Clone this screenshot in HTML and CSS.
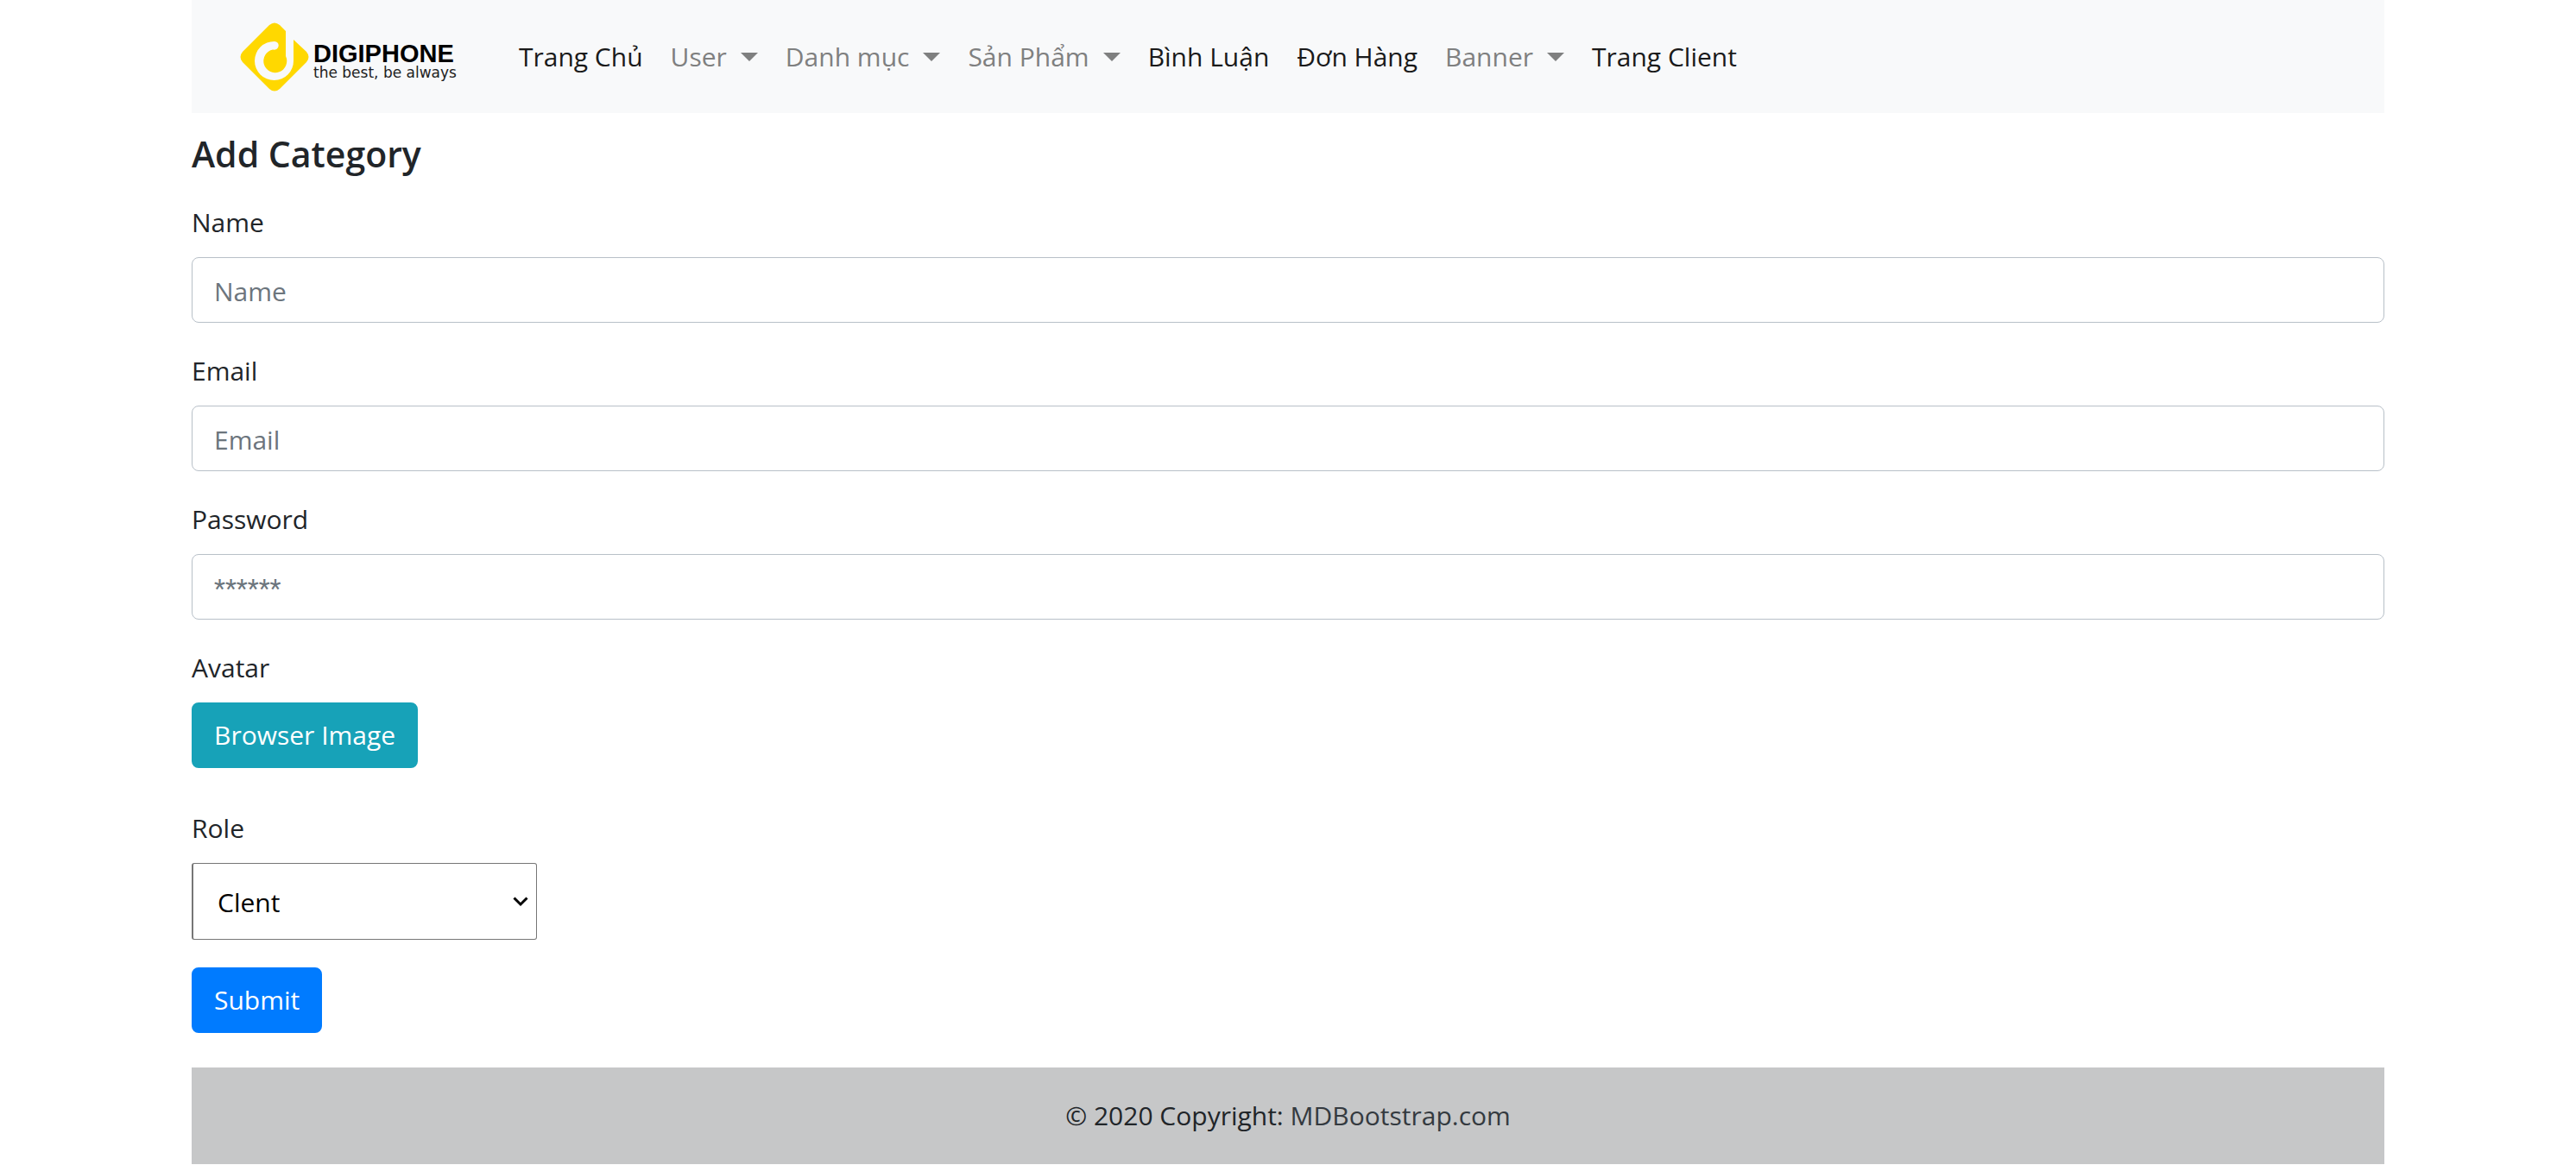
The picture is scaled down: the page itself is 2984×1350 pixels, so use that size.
FILE: index.html
```html
<!DOCTYPE html>
<html lang="vi">
<head>
<meta charset="utf-8">
<meta name="viewport" content="width=device-width, initial-scale=1">
<title>Add Category</title>
<link rel="stylesheet" href="styles.css">
</head>
<body>
<div class="container">
  <header class="navbar">
    <a class="brand" href="#">
      <svg class="brand-mark" viewBox="0 0 80 80" aria-hidden="true">
        <path fill="#ffd800" d="M34 3Q40-2 46 3L53 10V39A13.500 13.500 0 1 1 38 31.500C46 33 47 22 40 22A22.500 22.500 0 1 0 62 44V20L77 34Q82 40 77 46L46 77Q40 82 34 77L3 46Q-2 40 3 34Z"/>
      </svg>
      <span class="brand-text">
        <span class="brand-name">DIGIPHONE</span>
        <span class="brand-tagline">the best, be always</span>
      </span>
    </a>
    <nav class="nav">
      <a class="nav-link" href="#">Trang Chủ</a>
      <a class="nav-link nav-dropdown" href="#">User</a>
      <a class="nav-link nav-dropdown" href="#">Danh mục</a>
      <a class="nav-link nav-dropdown" href="#">Sản Phẩm</a>
      <a class="nav-link" href="#">Bình Luận</a>
      <a class="nav-link" href="#">Đơn Hàng</a>
      <a class="nav-link nav-dropdown" href="#">Banner</a>
      <a class="nav-link" href="#">Trang Client</a>
    </nav>
  </header>
  <main>
    <h1 class="title">Add Category</h1>
    <form class="form">
      <div class="form-group">
        <label for="name">Name</label>
        <input class="form-control" id="name" type="text" placeholder="Name">
      </div>
      <div class="form-group">
        <label for="email">Email</label>
        <input class="form-control" id="email" type="email" placeholder="Email">
      </div>
      <div class="form-group">
        <label for="password">Password</label>
        <input class="form-control form-control-password" id="password" type="password" placeholder="******">
      </div>
      <div class="form-group form-group-avatar">
        <label for="avatar">Avatar</label>
        <button class="btn btn-info" id="avatar" type="button">Browser Image</button>
      </div>
      <div class="form-group">
        <label for="role">Role</label>
        <div class="select">
          <select id="role"><option>Clent</option><option>Admin</option></select>
          <svg class="select-arrow" viewBox="0 0 18 12" aria-hidden="true"><path d="M1.500 1.500L9 9L16.500 1.500" fill="none" stroke="#000" stroke-width="3"/></svg>
        </div>
      </div>
      <button class="btn btn-primary" type="submit">Submit</button>
    </form>
  </main>
  <footer class="footer">© 2020 Copyright: <a href="#">MDBootstrap.com</a></footer>
</div>
</body>
</html>
```
FILE: styles.css
```css
* { box-sizing: border-box; }

body {
  margin: 0;
  background: #fff;
  color: #212529;
  font-family: "Open Sans", "Noto Sans", sans-serif;
  font-size: 30px;
  line-height: 48px;
}

.container {
  max-width: 2540px;
  margin: 0 auto;
}

.navbar {
  display: flex;
  flex-wrap: wrap;
  align-items: center;
  gap: 56px;
  min-height: 131px;
  padding: 16px 56px;
  background: #f8f9fa;
}

.brand {
  display: flex;
  align-items: center;
  gap: 5px;
  color: #000;
  text-decoration: none;
}

.brand-mark { width: 80px; height: 80px; }

.brand-text {
  display: flex;
  flex-direction: column;
  padding-top: 12px;
}

.brand-name {
  font: bold 29px/24px "Liberation Sans", Arial, sans-serif;
}

.brand-tagline {
  color: #222;
  font: 17px/20px "DejaVu Sans", sans-serif;
}

.nav {
  display: flex;
  flex-wrap: wrap;
}

.nav-link {
  padding: 0 16px;
  color: #1a1a1a;
  text-decoration: none;
}

.nav-dropdown {
  display: flex;
  align-items: center;
  gap: 16px;
  color: #7f8080;
}

.nav-dropdown::after {
  content: "";
  border: 10px solid transparent;
  border-top-color: currentColor;
  border-bottom: 0;
}

.title {
  margin: 20px 0 28px;
  font-size: 41px;
  font-weight: 600;
  line-height: 55px;
}

.form {
  display: flex;
  flex-direction: column;
  align-items: flex-start;
  gap: 32px;
}

.form-group {
  display: flex;
  flex-direction: column;
  align-items: flex-start;
  gap: 16px;
  width: 100%;
}

.form-group-avatar { margin-bottom: 14px; }

.form-control {
  width: 100%;
  height: 76px;
  padding: 2px 25px 0;
  border: 1px solid #b8c0c8;
  border-radius: 8px;
  background: #fff;
  color: #495057;
  font: inherit;
}

.form-control::placeholder { color: #6c757d; opacity: 1; }

.form-control-password { font-family: Roboto, sans-serif; }

.btn {
  height: 76px;
  padding: 0 24px;
  border: 2px solid transparent;
  border-radius: 8px;
  color: #fff;
  font: inherit;
}

.btn-info { border-color: #17a2b8; background: #17a2b8; }
.btn-primary { border-color: #007bff; background: #007bff; }

.select {
  display: grid;
  align-items: center;
  width: 400px;
}

.select select {
  grid-area: 1 / 1;
  width: 100%;
  height: 89px;
  padding: 2px 28px 0;
  border: 1px solid #767676;
  border-left-width: 2px;
  border-radius: 3px;
  background: #fff;
  color: #000;
  font: inherit;
  appearance: none;
}

.select-arrow {
  grid-area: 1 / 1;
  justify-self: end;
  width: 18px;
  height: 12px;
  margin-right: 10px;
  pointer-events: none;
}

.footer {
  margin-top: 40px;
  padding: 32px;
  background: #c6c7c8;
  text-align: center;
}

.footer a { color: #343a40; text-decoration: none; }
```
